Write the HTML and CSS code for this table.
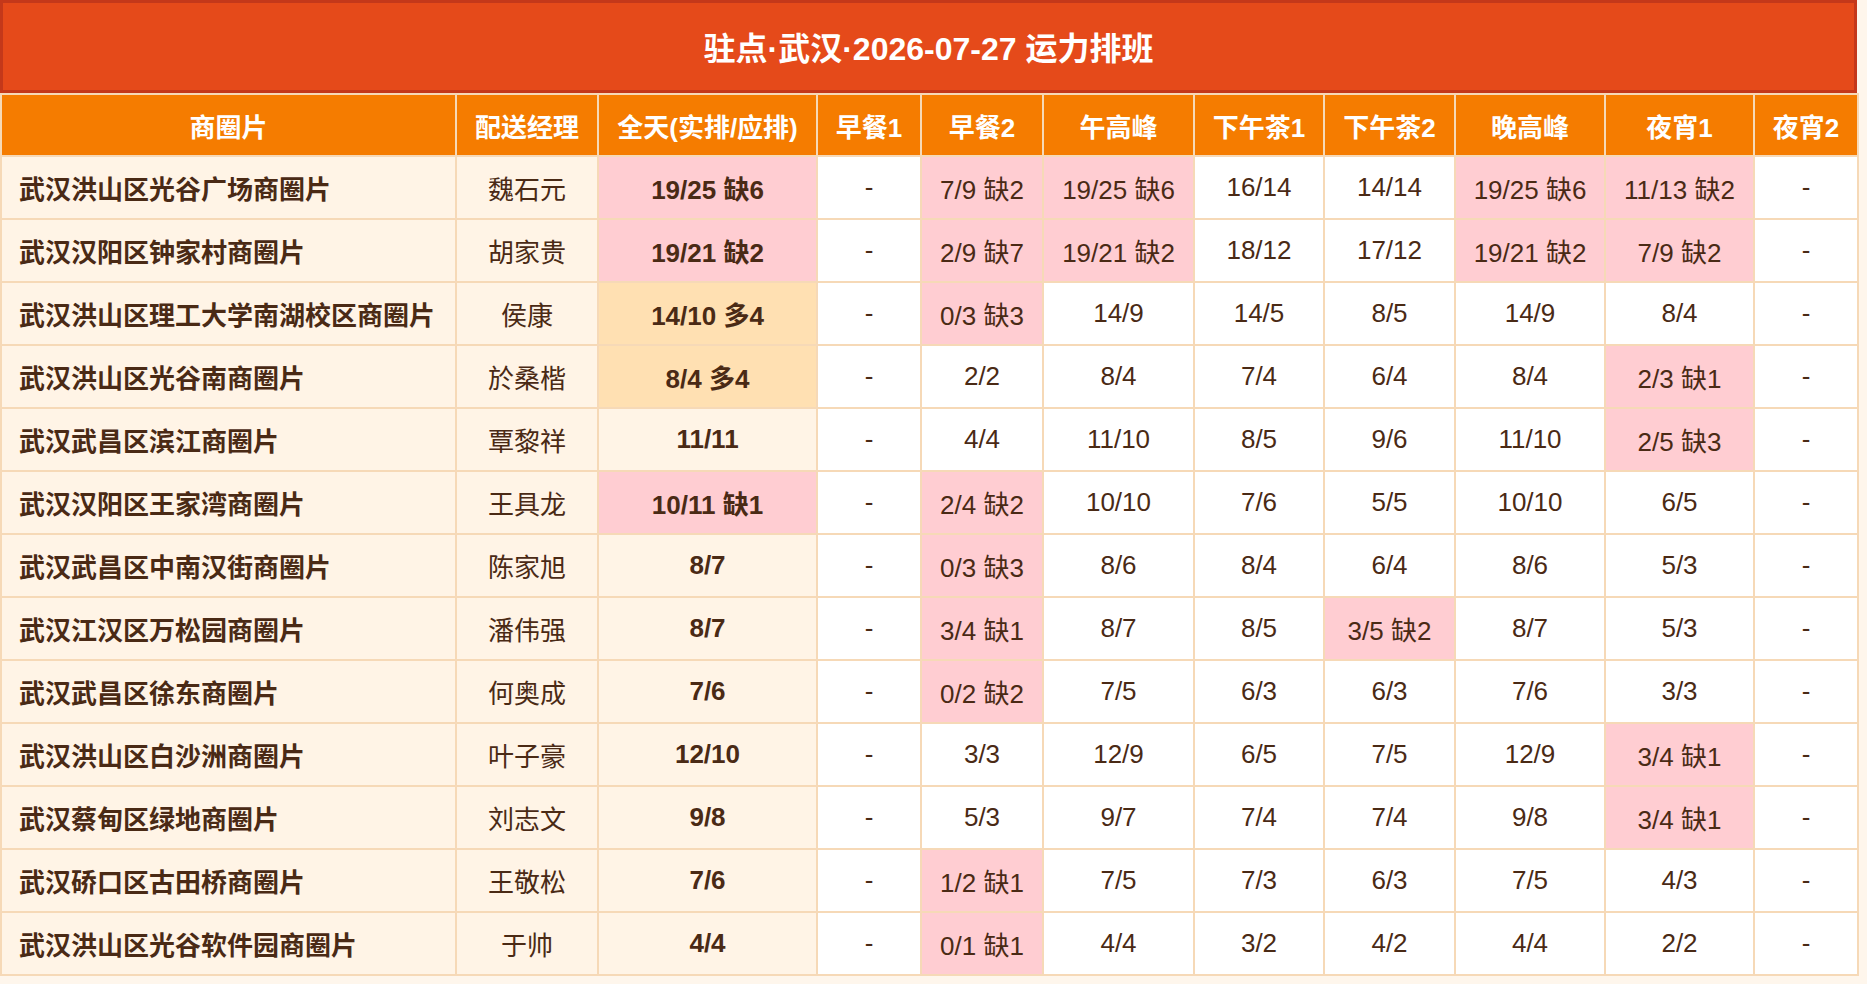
FILE: index.html
```html
<!DOCTYPE html>
<html lang="zh-CN">
<head>
<meta charset="utf-8">
<title>驻点·武汉·2026-07-27 运力排班</title>
<link rel="stylesheet" href="styles.css">
</head>
<body>
<div class="sheet">
  <div class="title">驻点·武汉·2026-07-27 运力排班</div>
  <table class="grid">
    <colgroup>
      <col class="c-area"><col class="c-mgr"><col class="c-day"><col class="c-b1"><col class="c-b2"><col class="c-noon"><col class="c-t1"><col class="c-t2"><col class="c-eve"><col class="c-n1"><col class="c-n2">
    </colgroup>
    <thead>
      <tr><th>商圈片</th><th>配送经理</th><th>全天(实排/应排)</th><th>早餐1</th><th>早餐2</th><th>午高峰</th><th>下午茶1</th><th>下午茶2</th><th>晚高峰</th><th>夜宵1</th><th>夜宵2</th></tr>
    </thead>
    <tbody>
      <tr><td class="area">武汉洪山区光谷广场商圈片</td><td class="mgr">魏石元</td><td class="day short">19/25 缺6</td><td>-</td><td class="short">7/9 缺2</td><td class="short">19/25 缺6</td><td>16/14</td><td>14/14</td><td class="short">19/25 缺6</td><td class="short">11/13 缺2</td><td>-</td></tr>
      <tr><td class="area">武汉汉阳区钟家村商圈片</td><td class="mgr">胡家贵</td><td class="day short">19/21 缺2</td><td>-</td><td class="short">2/9 缺7</td><td class="short">19/21 缺2</td><td>18/12</td><td>17/12</td><td class="short">19/21 缺2</td><td class="short">7/9 缺2</td><td>-</td></tr>
      <tr><td class="area">武汉洪山区理工大学南湖校区商圈片</td><td class="mgr">侯康</td><td class="day over">14/10 多4</td><td>-</td><td class="short">0/3 缺3</td><td>14/9</td><td>14/5</td><td>8/5</td><td>14/9</td><td>8/4</td><td>-</td></tr>
      <tr><td class="area">武汉洪山区光谷南商圈片</td><td class="mgr">於桑楷</td><td class="day over">8/4 多4</td><td>-</td><td>2/2</td><td>8/4</td><td>7/4</td><td>6/4</td><td>8/4</td><td class="short">2/3 缺1</td><td>-</td></tr>
      <tr><td class="area">武汉武昌区滨江商圈片</td><td class="mgr">覃黎祥</td><td class="day">11/11</td><td>-</td><td>4/4</td><td>11/10</td><td>8/5</td><td>9/6</td><td>11/10</td><td class="short">2/5 缺3</td><td>-</td></tr>
      <tr><td class="area">武汉汉阳区王家湾商圈片</td><td class="mgr">王具龙</td><td class="day short">10/11 缺1</td><td>-</td><td class="short">2/4 缺2</td><td>10/10</td><td>7/6</td><td>5/5</td><td>10/10</td><td>6/5</td><td>-</td></tr>
      <tr><td class="area">武汉武昌区中南汉街商圈片</td><td class="mgr">陈家旭</td><td class="day">8/7</td><td>-</td><td class="short">0/3 缺3</td><td>8/6</td><td>8/4</td><td>6/4</td><td>8/6</td><td>5/3</td><td>-</td></tr>
      <tr><td class="area">武汉江汉区万松园商圈片</td><td class="mgr">潘伟强</td><td class="day">8/7</td><td>-</td><td class="short">3/4 缺1</td><td>8/7</td><td>8/5</td><td class="short">3/5 缺2</td><td>8/7</td><td>5/3</td><td>-</td></tr>
      <tr><td class="area">武汉武昌区徐东商圈片</td><td class="mgr">何奥成</td><td class="day">7/6</td><td>-</td><td class="short">0/2 缺2</td><td>7/5</td><td>6/3</td><td>6/3</td><td>7/6</td><td>3/3</td><td>-</td></tr>
      <tr><td class="area">武汉洪山区白沙洲商圈片</td><td class="mgr">叶子豪</td><td class="day">12/10</td><td>-</td><td>3/3</td><td>12/9</td><td>6/5</td><td>7/5</td><td>12/9</td><td class="short">3/4 缺1</td><td>-</td></tr>
      <tr><td class="area">武汉蔡甸区绿地商圈片</td><td class="mgr">刘志文</td><td class="day">9/8</td><td>-</td><td>5/3</td><td>9/7</td><td>7/4</td><td>7/4</td><td>9/8</td><td class="short">3/4 缺1</td><td>-</td></tr>
      <tr><td class="area">武汉硚口区古田桥商圈片</td><td class="mgr">王敬松</td><td class="day">7/6</td><td>-</td><td class="short">1/2 缺1</td><td>7/5</td><td>7/3</td><td>6/3</td><td>7/5</td><td>4/3</td><td>-</td></tr>
      <tr><td class="area">武汉洪山区光谷软件园商圈片</td><td class="mgr">于帅</td><td class="day">4/4</td><td>-</td><td class="short">0/1 缺1</td><td>4/4</td><td>3/2</td><td>4/2</td><td>4/4</td><td>2/2</td><td>-</td></tr>
    </tbody>
  </table>
</div>
</body>
</html>
```

FILE: styles.css
```css
html, body {
  margin: 0;
  padding: 0;
  background: #fef6ec;
}

body {
  font-family: "Liberation Sans", "Noto Sans CJK SC", sans-serif;
  color: #4a2a15;
}

.sheet {
  width: 1857px;
}

.title {
  box-sizing: border-box;
  height: 93px;
  background: #e54a1a;
  border: 3px solid #c4381a;
  color: #ffffff;
  font-size: 32px;
  font-weight: bold;
  display: flex;
  align-items: center;
  justify-content: center;
  padding-bottom: 2px;
}

.grid {
  width: 1857px;
  table-layout: fixed;
  border-collapse: collapse;
  border: 2px solid #f6d9b7;
  font-size: 26px;
}

.c-area { width: 455px; }
.c-mgr { width: 142px; }
.c-day { width: 219px; }
.c-b1 { width: 104px; }
.c-b2 { width: 122px; }
.c-noon { width: 151px; }
.c-t1 { width: 130px; }
.c-t2 { width: 131px; }
.c-eve { width: 150px; }
.c-n1 { width: 149px; }
.c-n2 { width: 104px; }

.grid th {
  height: 60px;
  padding: 0;
  background: #f57c00;
  color: #ffffff;
  font-weight: bold;
  border: 2px solid #f6d9b7;
  border-top: none;
  text-align: center;
  vertical-align: middle;
}

.grid td {
  height: 61px;
  padding: 0;
  background: #ffffff;
  border: 2px solid #f6d9b7;
  text-align: center;
  vertical-align: middle;
  white-space: nowrap;
}

.grid td.area {
  background: #fff4e6;
  font-weight: bold;
  text-align: left;
  padding-left: 17px;
}

.grid td.mgr {
  background: #fff4e6;
}

.grid td.day {
  background: #fff4e6;
  font-weight: bold;
}

.grid td.short {
  background: #ffcdd2;
}

.grid td.over {
  background: #ffe0b2;
}
```
